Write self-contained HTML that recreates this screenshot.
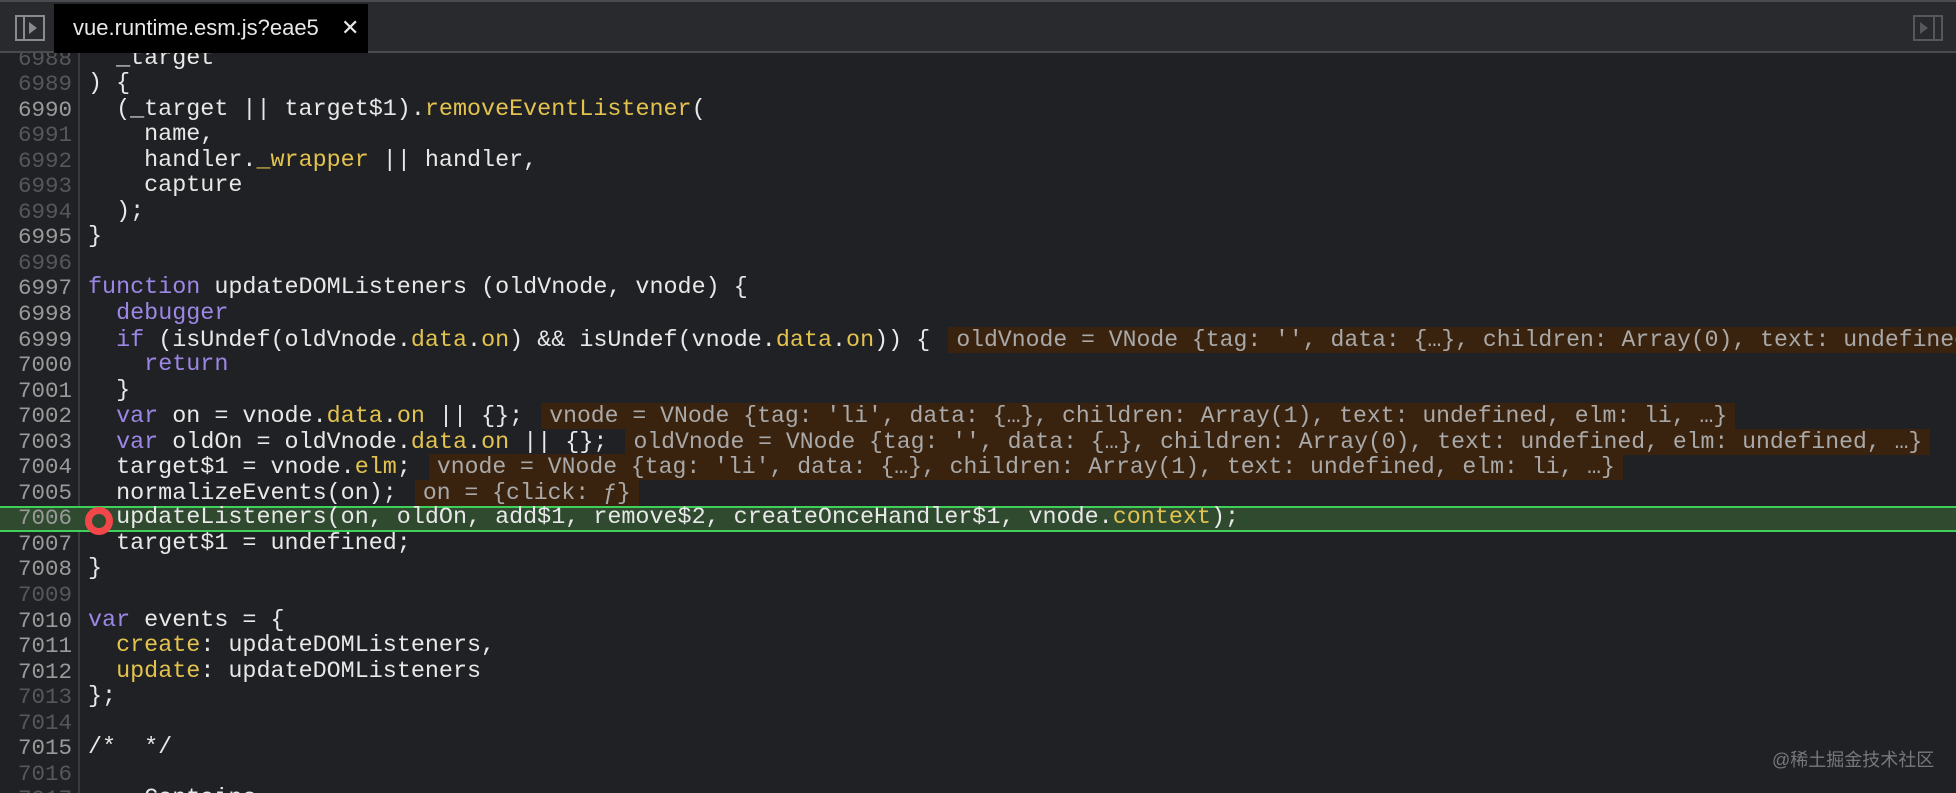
<!DOCTYPE html>
<html><head><meta charset="utf-8"><style>
html,body{margin:0;padding:0;width:1956px;height:793px;overflow:hidden;background:#202124;}
#tabbar{position:absolute;left:0;top:0;width:1956px;background:#292a2d;border-top:2px solid #4a4b4e;box-sizing:border-box;border-bottom:2px solid #4a4b4e;height:53px;}
#tab{position:absolute;left:54px;top:2px;width:314px;height:49px;background:#000;color:#e8e8e8;font:22px "Liberation Sans",sans-serif;line-height:47px;padding-left:19px;box-sizing:border-box;}
#tab .x{position:absolute;left:287px;top:0;font-size:22px;}
#code{position:absolute;left:0;top:53px;width:1956px;height:740px;overflow:hidden;}
#gut{position:absolute;left:0;top:0;width:80px;height:740px;border-right:2px solid #3a3b3e;box-sizing:border-box;background:#202124;}
#lines{position:absolute;left:0;top:-6.5px;width:1956px;font:23.4px "Liberation Mono",monospace;}
.l{position:relative;height:25.55px;line-height:25.55px;white-space:pre;}
.n{position:absolute;left:0;width:72px;text-align:right;color:#9a9a9a;font-size:22.5px;}
.n.d{color:#55575b;}
.c{position:absolute;left:88px;color:#e8e8e8;}
.k{color:#9d87e6}.y{color:#e3c34e}
.v{background:#3a230e;color:#a9a9a9;padding:0 8px 0 8px;margin-left:4px;font-size:23.1px;}
.p{background:#2f4a2f;border-top:2px solid #3fd05a;border-bottom:2px solid #3fd05a;box-sizing:border-box;}
.p .bg{position:absolute;left:81px;right:0;top:0;bottom:0;}
</style></head><body>
<div id="tabbar">
<svg style="position:absolute;left:15px;top:13px" width="30" height="26" viewBox="0 0 30 26"><rect x="1" y="1" width="28" height="24" fill="none" stroke="#8a8b8e" stroke-width="2"/><line x1="9" y1="1" x2="9" y2="25" stroke="#8a8b8e" stroke-width="2"/><path d="M14 7 L22 13 L14 19Z" fill="#8a8b8e"/></svg>
<div id="tab">vue.runtime.esm.js?eae5<span class="x">✕</span></div>
<svg style="position:absolute;left:1913px;top:13px" width="30" height="26" viewBox="0 0 30 26"><rect x="1" y="1" width="28" height="24" fill="none" stroke="#55575b" stroke-width="2"/><line x1="21" y1="1" x2="21" y2="25" stroke="#55575b" stroke-width="2"/><path d="M7 7 L15 13 L7 19Z" fill="#55575b"/></svg>
</div>
<div id="code"><div id="gut"></div>
<div id="lines">
<div class="l"><span class="n d">6988</span><span class="c">  _target</span></div>
<div class="l"><span class="n d">6989</span><span class="c">) {</span></div>
<div class="l"><span class="n">6990</span><span class="c">  (_target || target$1).<span class="y">removeEventListener</span>(</span></div>
<div class="l"><span class="n d">6991</span><span class="c">    name,</span></div>
<div class="l"><span class="n d">6992</span><span class="c">    handler.<span class="y">_wrapper</span> || handler,</span></div>
<div class="l"><span class="n d">6993</span><span class="c">    capture</span></div>
<div class="l"><span class="n d">6994</span><span class="c">  );</span></div>
<div class="l"><span class="n">6995</span><span class="c">}</span></div>
<div class="l"><span class="n d">6996</span><span class="c"></span></div>
<div class="l"><span class="n">6997</span><span class="c"><span class="k">function</span> updateDOMListeners (oldVnode, vnode) {</span></div>
<div class="l"><span class="n">6998</span><span class="c">  <span class="k">debugger</span></span></div>
<div class="l"><span class="n">6999</span><span class="c">  <span class="k">if</span> (isUndef(oldVnode.<span class="y">data</span>.<span class="y">on</span>) &amp;&amp; isUndef(vnode.<span class="y">data</span>.<span class="y">on</span>)) { <span class="v">oldVnode = VNode {tag: '', data: {…}, children: Array(0), text: undefined, elm: undefined, …}</span></span></div>
<div class="l"><span class="n">7000</span><span class="c">    <span class="k">return</span></span></div>
<div class="l"><span class="n">7001</span><span class="c">  }</span></div>
<div class="l"><span class="n">7002</span><span class="c">  <span class="k">var</span> on = vnode.<span class="y">data</span>.<span class="y">on</span> || {}; <span class="v">vnode = VNode {tag: 'li', data: {…}, children: Array(1), text: undefined, elm: li, …}</span></span></div>
<div class="l"><span class="n">7003</span><span class="c">  <span class="k">var</span> oldOn = oldVnode.<span class="y">data</span>.<span class="y">on</span> || {}; <span class="v">oldVnode = VNode {tag: '', data: {…}, children: Array(0), text: undefined, elm: undefined, …}</span></span></div>
<div class="l"><span class="n">7004</span><span class="c">  target$1 = vnode.<span class="y">elm</span>; <span class="v">vnode = VNode {tag: 'li', data: {…}, children: Array(1), text: undefined, elm: li, …}</span></span></div>
<div class="l"><span class="n">7005</span><span class="c">  normalizeEvents(on); <span class="v">on = {click: ƒ}</span></span></div>
<div class="l p"><div class="bg"></div><span class="n" style="top:-2px">7006</span><svg style="position:absolute;left:85px;top:-1px" width="28" height="28"><circle cx="14" cy="14" r="10.5" fill="none" stroke="#f2474a" stroke-width="7"/></svg><span class="c" style="top:-2px">  updateListeners(on, oldOn, add$1, remove$2, createOnceHandler$1, vnode.<span class="y">context</span>);</span></div>
<div class="l"><span class="n">7007</span><span class="c">  target$1 = undefined;</span></div>
<div class="l"><span class="n">7008</span><span class="c">}</span></div>
<div class="l"><span class="n d">7009</span><span class="c"></span></div>
<div class="l"><span class="n">7010</span><span class="c"><span class="k">var</span> events = {</span></div>
<div class="l"><span class="n">7011</span><span class="c">  <span class="y">create</span>: updateDOMListeners,</span></div>
<div class="l"><span class="n">7012</span><span class="c">  <span class="y">update</span>: updateDOMListeners</span></div>
<div class="l"><span class="n d">7013</span><span class="c">};</span></div>
<div class="l"><span class="n d">7014</span><span class="c"></span></div>
<div class="l"><span class="n">7015</span><span class="c">/*  */</span></div>
<div class="l"><span class="n d">7016</span><span class="c"></span></div>
<div class="l"><span class="n d">7017</span><span class="c">    Contains</span></div>
</div>
<div style="position:absolute;left:1772px;top:693px;font:18px 'Liberation Sans','Noto Sans CJK SC',sans-serif;color:#77787b;">@稀土掘金技术社区</div>
</div>
</body></html>
